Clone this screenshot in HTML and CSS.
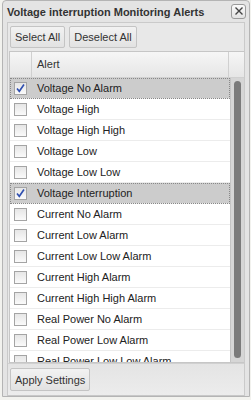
FILE: index.html
```html
<!DOCTYPE html>
<html lang="en">
<head>
    <meta charset="UTF-8">
    <title>Voltage interruption Monitoring Alerts</title>
    <link rel="stylesheet" href="styles.css">
</head>
<body>

    <div class="window">
        <div class="titlebar">
            <span class="title">Voltage interruption Monitoring Alerts</span>
            <span class="close">
                <svg width="10" height="10" viewBox="0 0 10 10"><path d="M1.5 1.5 L8.5 8.5 M8.5 1.5 L1.5 8.5" stroke="#444" stroke-width="1.4"/></svg>
            </span>
        </div>

        <div class="panel">
            <!-- top buttons -->
            <div class="toolbar">
                <button class="btn">Select All</button>
                <button class="btn">Deselect All</button>
            </div>

            <div class="grid">
                <div class="grid-header">
                    <div class="col-check"></div>
                    <div class="col-alert">Alert</div>
                    <div class="col-pad"></div>
                </div>
                <div class="grid-body">
                    <div class="rows">
                        <div class="row selected"><span class="cb"><svg width="11" height="11" viewBox="0 0 11 11"><path d="M2 5.5 L4.3 8.3 L9 1.5" fill="none" stroke="#2f4fb0" stroke-width="1.6"/></svg></span><span>Voltage No Alarm</span></div>
                        <div class="row"><span class="cb"></span><span>Voltage High</span></div>
                        <div class="row"><span class="cb"></span><span>Voltage High High</span></div>
                        <div class="row"><span class="cb"></span><span>Voltage Low</span></div>
                        <div class="row"><span class="cb"></span><span>Voltage Low Low</span></div>
                        <div class="row selected"><span class="cb"><svg width="11" height="11" viewBox="0 0 11 11"><path d="M2 5.5 L4.3 8.3 L9 1.5" fill="none" stroke="#2f4fb0" stroke-width="1.6"/></svg></span><span>Voltage Interruption</span></div>
                        <div class="row"><span class="cb"></span><span>Current No Alarm</span></div>
                        <div class="row"><span class="cb"></span><span>Current Low Alarm</span></div>
                        <div class="row"><span class="cb"></span><span>Current Low Low Alarm</span></div>
                        <div class="row"><span class="cb"></span><span>Current High Alarm</span></div>
                        <div class="row"><span class="cb"></span><span>Current High High Alarm</span></div>
                        <div class="row"><span class="cb"></span><span>Real Power No Alarm</span></div>
                        <div class="row"><span class="cb"></span><span>Real Power Low Alarm</span></div>
                        <div class="row"><span class="cb"></span><span>Real Power Low Low Alarm</span></div>
                    </div>
                    <div class="scrollbar"><div class="thumb"></div></div>
                </div>
            </div>

            <div class="footer">
                <button class="btn">Apply Settings</button>
            </div>
        </div>
    </div>

</body>
</html>
```

FILE: styles.css
```css
body {
    margin: 0;
    padding: 0;
    background-color: #f2f2ee;
    font-family: "Liberation Sans", Arial, sans-serif;
    font-size: 11px;
    color: #222;
}
.window {
    margin-left: 2px;
    width: 246px;
    height: 395px;
    border: 1px solid #b4b4b4;
    border-radius: 4px 4px 0 0;
    background-color: #e4e4e4;
    display: flex;
    flex-direction: column;
}
.titlebar {
    height: 22px;
    display: flex;
    align-items: center;
    justify-content: space-between;
    padding: 0 3px 0 4px;
}
.title {
    font-weight: bold;
    color: #333;
}
.close {
    width: 13px;
    height: 13px;
    border: 1px solid #9a9a9a;
    border-radius: 3px;
    background: linear-gradient(#fafafa, #e2e2e2);
    display: flex;
    align-items: center;
    justify-content: center;
    margin-top: -1px;
}
.panel {
    margin: 0 4px;
    flex: 1;
    border: 1px solid #cacaca;
    border-bottom: 0;
    display: flex;
    flex-direction: column;
    background-color: #e8e8e8;
}
.toolbar {
    display: flex;
    gap: 4px;
    padding: 3px 2px;
}
.btn {
    font-family: "Liberation Sans", Arial, sans-serif;
    font-size: 11px;
    color: #333;
    height: 22px;
    padding: 0 4px;
    border: 1px solid #c4c4c4;
    border-radius: 2px;
    background: linear-gradient(#f2f2f2, #e2e2e2);
}
.grid {
    margin: 0 0 0 1px;
    border: 1px solid #c6c6c6;
    border-right: 0;
    background-color: #fff;
}
.grid-header {
    display: flex;
    height: 25px;
    background: linear-gradient(#f6f6f6, #e6e6e6);
    border-bottom: 1px solid #d0d0d0;
}
.col-check {
    width: 21px;
    border-right: 1px solid #d0d0d0;
}
.col-alert {
    flex: 1;
    padding-left: 5px;
    line-height: 25px;
    color: #333;
    border-right: 1px solid #d0d0d0;
}
.col-pad {
    width: 15px;
}
.grid-body {
    display: flex;
    height: 284px;
    overflow: hidden;
}
.rows {
    flex: 1;
    overflow: hidden;
}
.row {
    height: 20px;
    display: flex;
    align-items: center;
    gap: 10px;
    padding-left: 4px;
    border-bottom: 1px solid #ececec;
    white-space: nowrap;
}
.row.selected {
    background-color: #cccccc;
    outline: 1px dotted #888;
    outline-offset: -1px;
}
.cb {
    width: 11px;
    height: 11px;
    border: 1px solid #a4a4a4;
    background: linear-gradient(#e6e6e6, #fafafa);
    flex-shrink: 0;
    display: flex;
}
.scrollbar {
    width: 13px;
    background-color: #d6d6d6;
    border-left: 1px solid #c4c4c4;
    padding: 3px 0;
    display: flex;
    justify-content: center;
}
.thumb {
    width: 7px;
    height: 277px;
    border-radius: 4px;
    background-color: #7b7b7b;
}
.footer {
    height: 31px;
    display: flex;
    align-items: center;
    padding: 0 2px;
    border-top: 1px solid #d0d0d0;
    border-bottom: 1px solid #c8c8c8;
    background: linear-gradient(#e4e4e4, #ececec);
}
.footer .btn {
    height: 23px;
}
```
